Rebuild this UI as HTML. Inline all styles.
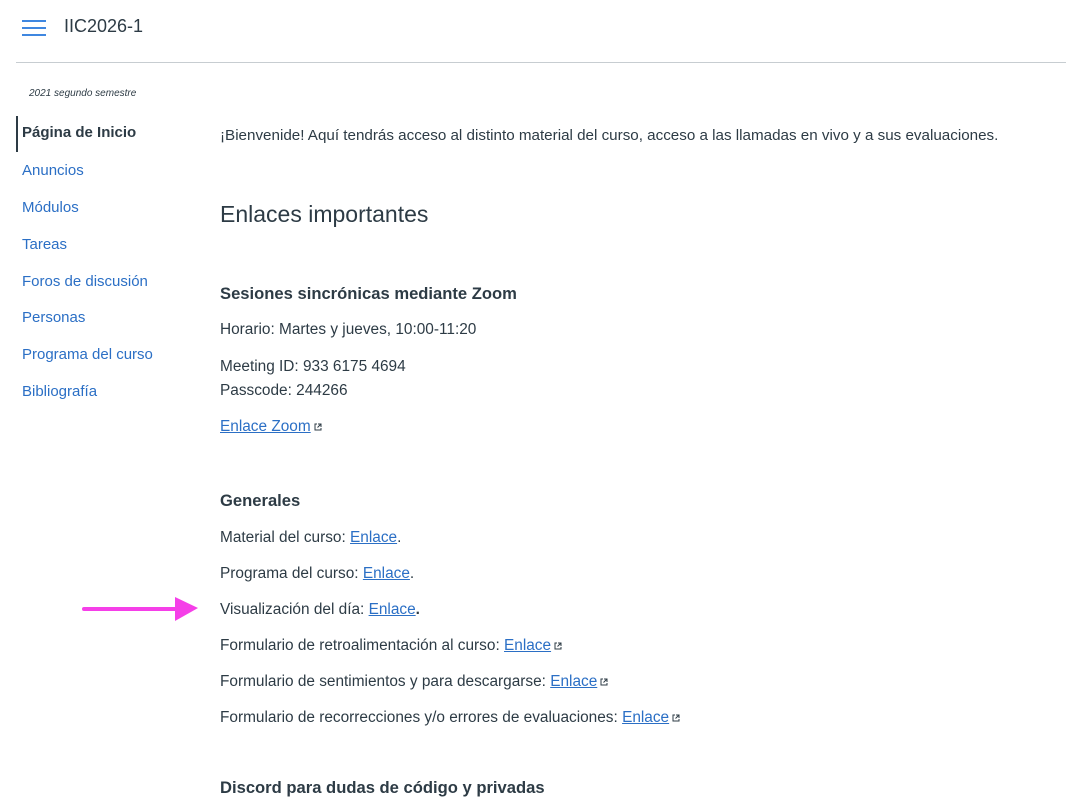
<!DOCTYPE html>
<html><head><meta charset="utf-8"><style>
body{margin:0;width:1066px;height:788px;overflow:hidden;background:#fff;font-family:"Liberation Sans",sans-serif;color:#2d3b45;position:relative}
.a{position:absolute;white-space:nowrap}
a{color:#2b6fc5;text-decoration:underline}
.nav{font-size:15px;color:#2b6fc5}
.t{font-size:15.4px}
.ext{display:inline-block;width:8px;height:8px;margin-left:3px;vertical-align:0}
.hd{font-size:16.6px;font-weight:bold}
</style></head><body>
<svg class="a" style="left:22px;top:19px" width="24" height="18"><g stroke="#3f87e0" stroke-width="2"><line x1="0" y1="2" x2="24" y2="2"/><line x1="0" y1="9" x2="24" y2="9"/><line x1="0" y1="16" x2="24" y2="16"/></g></svg>
<div class="a" style="left:64px;top:16px;font-size:18px">IIC2026-1</div>
<div class="a" style="left:16px;top:62px;width:1050px;height:1px;background:#c7cdd1"></div>
<div class="a" style="left:29px;top:88px;font-size:10px;font-style:italic">2021 segundo semestre</div>
<div class="a" style="left:16px;top:116px;width:2px;height:36px;background:#2d3b45"></div>
<div class="a" style="left:22px;top:124px;font-size:15px;font-weight:bold">Página de Inicio</div>
<div class="a nav" style="left:22px;top:162px">Anuncios</div>
<div class="a nav" style="left:22px;top:199px">Módulos</div>
<div class="a nav" style="left:22px;top:236px">Tareas</div>
<div class="a nav" style="left:22px;top:273px">Foros de discusión</div>
<div class="a nav" style="left:22px;top:309px">Personas</div>
<div class="a nav" style="left:22px;top:346px">Programa del curso</div>
<div class="a nav" style="left:22px;top:383px">Bibliografía</div>

<div class="a" style="left:220px;top:127px;font-size:15.2px">¡Bienvenide! Aquí tendrás acceso al distinto material del curso, acceso a las llamadas en vivo y a sus evaluaciones.</div>
<div class="a" style="left:220px;top:201px;font-size:23px">Enlaces importantes</div>
<div class="a hd" style="left:220px;top:284px">Sesiones sincrónicas mediante Zoom</div>
<div class="a t" style="left:220px;top:321px">Horario: Martes y jueves, 10:00-11:20</div>
<div class="a t" style="left:220px;top:358px">Meeting ID: 933 6175 4694</div>
<div class="a t" style="left:220px;top:382px">Passcode: 244266</div>
<div class="a t" style="left:220px;top:418px"><a>Enlace Zoom</a><svg class="ext" viewBox="0 0 8 8"><path d="M3 1H1V7H7V5M4 1H7V4M7 1L3.5 4.5" fill="none" stroke="#2d3b45" stroke-width="1"/></svg></div>
<div class="a hd" style="left:220px;top:491px">Generales</div>
<div class="a t" style="left:220px;top:529px">Material del curso: <a>Enlace</a>.</div>
<div class="a t" style="left:220px;top:565px">Programa del curso: <a>Enlace</a>.</div>
<div class="a t" style="left:220px;top:601px">Visualización del día: <a>Enlace</a><b>.</b></div>
<div class="a t" style="left:220px;top:637px">Formulario de retroalimentación al curso: <a>Enlace</a><svg class="ext" viewBox="0 0 8 8"><path d="M3 1H1V7H7V5M4 1H7V4M7 1L3.5 4.5" fill="none" stroke="#2d3b45" stroke-width="1"/></svg></div>
<div class="a t" style="left:220px;top:673px">Formulario de sentimientos y para descargarse: <a>Enlace</a><svg class="ext" viewBox="0 0 8 8"><path d="M3 1H1V7H7V5M4 1H7V4M7 1L3.5 4.5" fill="none" stroke="#2d3b45" stroke-width="1"/></svg></div>
<div class="a t" style="left:220px;top:709px">Formulario de recorrecciones y/o errores de evaluaciones: <a>Enlace</a><svg class="ext" viewBox="0 0 8 8"><path d="M3 1H1V7H7V5M4 1H7V4M7 1L3.5 4.5" fill="none" stroke="#2d3b45" stroke-width="1"/></svg></div>
<div class="a hd" style="left:220px;top:778px">Discord para dudas de código y privadas</div>

<svg class="a" style="left:82px;top:594px" width="116" height="32"><line x1="2" y1="15" x2="96" y2="15" stroke="#f53fe8" stroke-width="4" stroke-linecap="round"/><polygon points="93,3 116,14 93,27" fill="#f53fe8"/></svg>
</body></html>
